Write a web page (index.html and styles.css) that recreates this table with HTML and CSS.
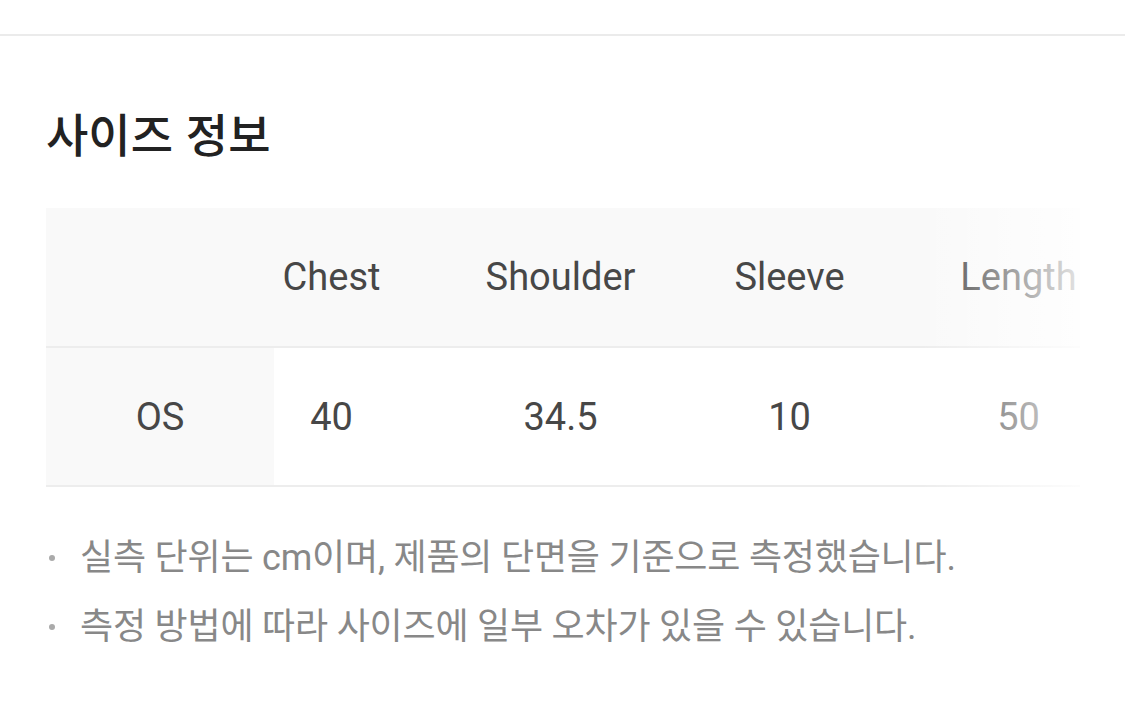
FILE: index.html
```html
<!DOCTYPE html>
<html lang="ko">
  <head>
    <meta charset="utf-8" />
    <link rel="stylesheet" href="styles.css">
  </head>
  <body>
    <div class="top-divider"></div>

    <section class="size-info">
      <h2 class="size-title">사이즈 정보</h2>

      <div class="size-table-wrap">
        <div class="size-scroll" id="sizeScroll">
          <table class="size-table">
            <thead>
              <tr>
                <th class="sticky-col"></th>
                <th>Chest</th>
                <th>Shoulder</th>
                <th>Sleeve</th>
                <th>Length</th>
              </tr>
            </thead>
            <tbody>
              <tr>
                <td class="sticky-col">OS</td>
                <td>40</td>
                <td>34.5</td>
                <td>10</td>
                <td>50</td>
              </tr>
            </tbody>
          </table>
        </div>
        <div class="size-fade"></div>
      </div>

      <ul class="size-notes">
        <li>실측 단위는 cm이며, 제품의 단면을 기준으로 측정했습니다.</li>
        <li>측정 방법에 따라 사이즈에 일부 오차가 있을 수 있습니다.</li>
      </ul>
    </section>

    <script>
      // table is scrolled a bit to the right, first column stays put
      const sizeScroll = document.getElementById("sizeScroll");
      sizeScroll.scrollLeft = 57;
    </script>
  </body>
</html>
```

FILE: styles.css
```css
* {
  box-sizing: border-box;
}

body {
  margin: 0;
  background: #fff;
  font-family: Roboto, "Noto Sans CJK KR", sans-serif;
  color: #444;
}

.top-divider {
  height: 36px;
  border-bottom: 2px solid #ebebeb;
}

.size-info {
  padding: 0 45px 0 46px;
}

.size-title {
  margin: 0;
  padding-top: 66px;
  height: 172px;
  font-family: "Noto Sans CJK KR", sans-serif;
  font-size: 46px;
  font-weight: 500;
  line-height: 60px;
  color: #222;
}

.size-table-wrap {
  position: relative;
}

.size-scroll {
  overflow-x: auto;
  scrollbar-width: none;
}

.size-scroll::-webkit-scrollbar {
  display: none;
}

.size-table {
  border-collapse: collapse;
  table-layout: fixed;
  width: 1144px;
}

.size-table th,
.size-table td {
  width: 229px;
  height: 139px;
  padding: 0;
  text-align: center;
  font-size: 38px;
  font-weight: 400;
  color: #474747;
}

.size-table thead tr {
  background: #f9f9f9;
}

.size-table tr {
  border-bottom: 2px solid #ededed;
}

.size-table .sticky-col {
  width: 228px;
  position: sticky;
  left: 0;
  z-index: 1;
  background: #f9f9f9;
}

/* white fade on the right edge of the table */
.size-fade {
  position: absolute;
  top: 0;
  right: 0;
  bottom: 0;
  width: 160px;
  pointer-events: none;
  background: linear-gradient(to right, rgba(255, 255, 255, 0), rgba(255, 255, 255, 0.85));
}

.size-notes {
  list-style: none;
  margin: 0;
  padding: 37px 0 0;
}

.size-notes li {
  position: relative;
  padding-left: 34px;
  font-size: 36px;
  line-height: 69px;
  color: #888;
  letter-spacing: -0.2px;
}

.size-notes li::before {
  content: "";
  position: absolute;
  left: 3px;
  top: 31px;
  width: 6px;
  height: 6px;
  border-radius: 50%;
  background: #aaa;
}
```
